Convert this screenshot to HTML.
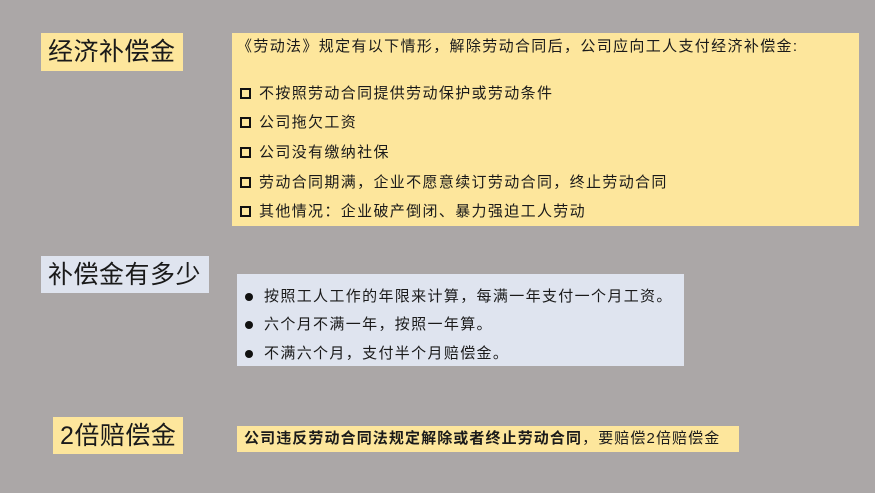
<!DOCTYPE html>
<html><head><meta charset="utf-8"><style>
body{margin:0;width:875px;height:493px;background:#aba7a7;position:relative;overflow:hidden;font-family:"Liberation Sans","Noto Sans CJK SC",sans-serif;color:#1a1a1a}
.a{position:absolute;white-space:nowrap}
.t{font-size:25px;line-height:38px;padding-left:7px;box-sizing:border-box;letter-spacing:0.5px}
.y{background:#fde69c}
.b{background:#dfe4ef}
.s{font-size:15px;letter-spacing:1.35px;line-height:18px}
.sq{position:absolute;width:7px;height:7px;border:2.5px solid #111;left:240px}
.dot{position:absolute;width:8px;height:8px;border-radius:50%;background:#111;left:245px}
</style></head><body>
<div class="a t y" style="left:41px;top:33px;width:142px;height:38px">经济补偿金</div>
<div class="a y" style="left:232px;top:33px;width:627px;height:193px"></div>
<div class="a s" style="left:237px;top:38px">《劳动法》规定有以下情形，解除劳动合同后，公司应向工人支付经济补偿金:</div>
<div class="sq" style="top:88px"></div><div class="a s" style="left:259px;top:85px">不按照劳动合同提供劳动保护或劳动条件</div>
<div class="sq" style="top:117px"></div><div class="a s" style="left:259px;top:114px">公司拖欠工资</div>
<div class="sq" style="top:147px"></div><div class="a s" style="left:259px;top:144px">公司没有缴纳社保</div>
<div class="sq" style="top:177px"></div><div class="a s" style="left:259px;top:174px">劳动合同期满，企业不愿意续订劳动合同，终止劳动合同</div>
<div class="sq" style="top:206px"></div><div class="a s" style="left:259px;top:203px">其他情况：企业破产倒闭、暴力强迫工人劳动</div>

<div class="a t b" style="left:41px;top:256px;width:168px;height:37px">补偿金有多少</div>
<div class="a b" style="left:237px;top:274px;width:447px;height:92px"></div>
<div class="dot" style="top:293px"></div><div class="a s" style="left:264px;top:288px">按照工人工作的年限来计算，每满一年支付一个月工资。</div>
<div class="dot" style="top:321px"></div><div class="a s" style="left:264px;top:316px">六个月不满一年，按照一年算。</div>
<div class="dot" style="top:350px"></div><div class="a s" style="left:264px;top:345px">不满六个月，支付半个月赔偿金。</div>

<div class="a t y" style="left:53px;top:417px;width:130px;height:37px">2倍赔偿金</div>
<div class="a y" style="left:237px;top:426px;width:502px;height:26px"></div>
<div class="a s" style="left:244px;top:430px;letter-spacing:1.1px"><b>公司违反劳动合同法规定解除或者终止劳动合同</b>，要赔偿2倍赔偿金</div>
</body></html>
